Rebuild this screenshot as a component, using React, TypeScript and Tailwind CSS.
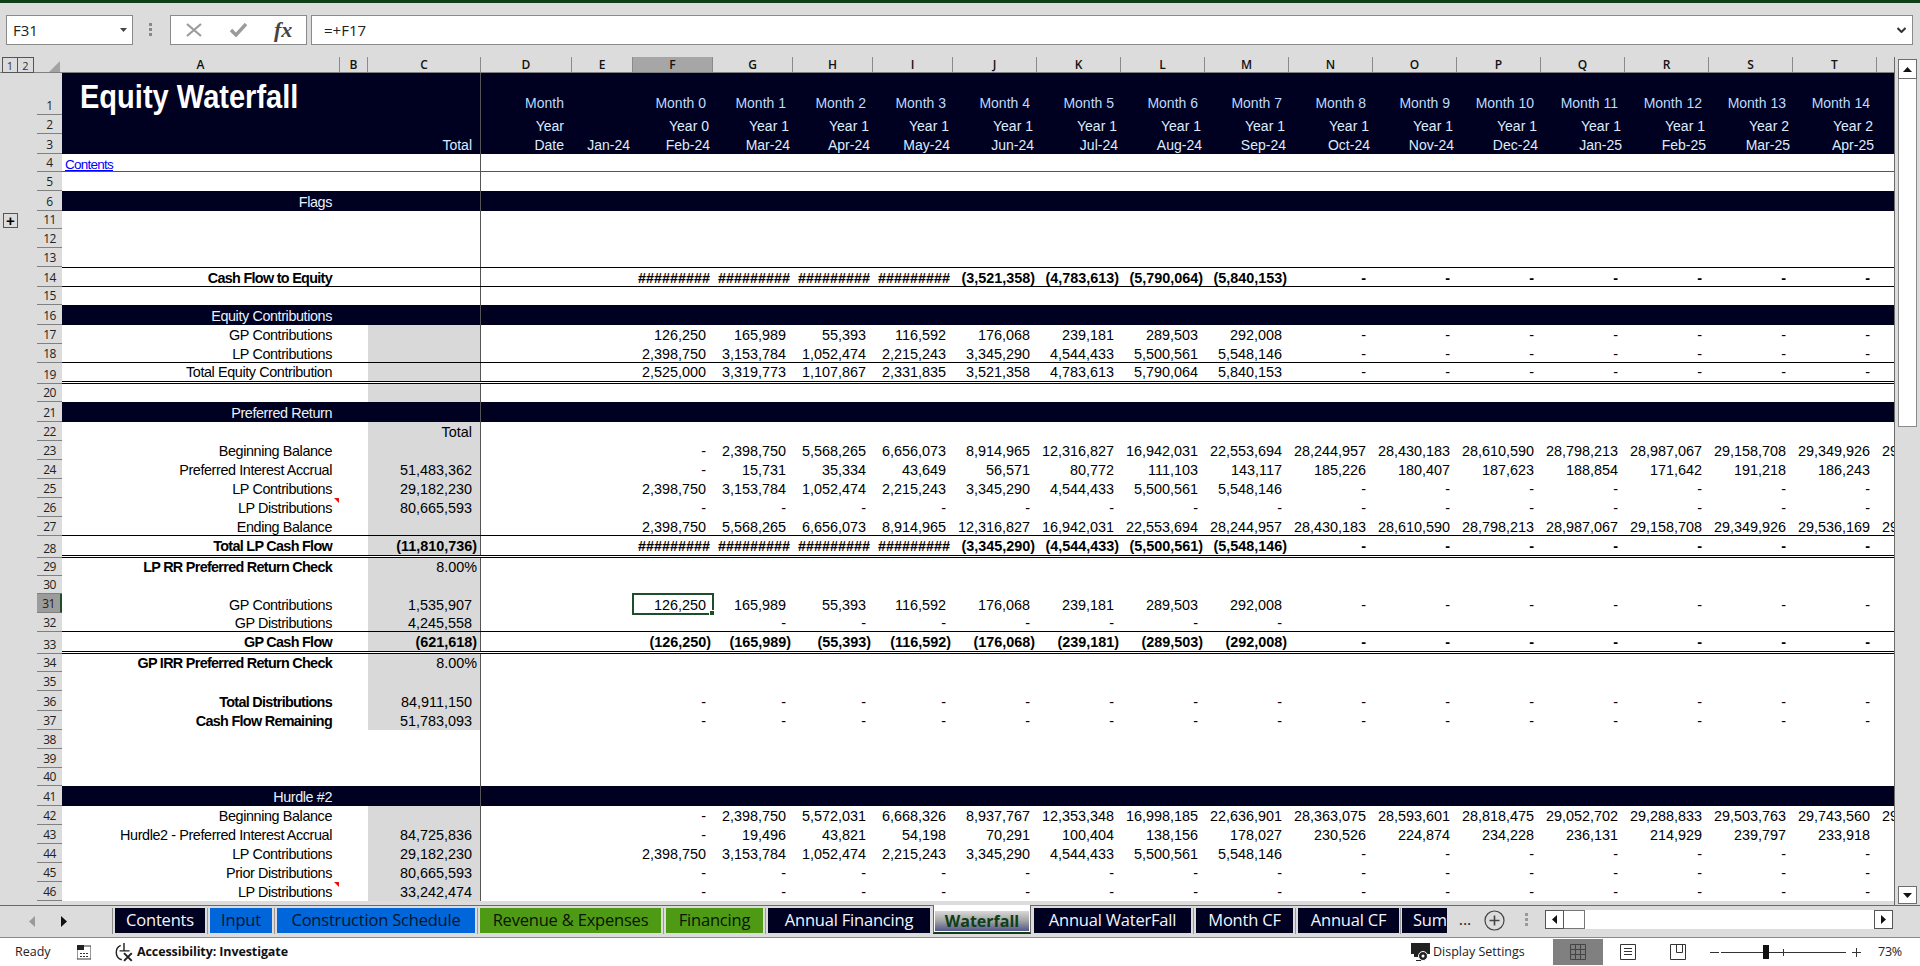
import * as React from "react";

const GRID =
  "grid grid-cols-[278px_28px_113px_91px_61px_repeat(4,80px)_repeat(12,84px)] w-[1899px]";

const COLUMNS = ["A", "B", "C", "D", "E", "F", "G", "H", "I", "J", "K", "L", "M", "N", "O", "P", "Q", "R", "S", "T", ""];

const dashes = (n: number) => Array.from({ length: n }, () => "-");
const HASH = "#########";

const lpContrib = ["2,398,750", "3,153,784", "1,052,474", "2,215,243", "3,345,290", "4,544,433", "5,500,561", "5,548,146"];
const gpContrib = ["126,250", "165,989", "55,393", "116,592", "176,068", "239,181", "289,503", "292,008"];

// rows whose text sits one pixel lower in the cell
const LOW_ROWS = [14, 18, 27, 31, 32];

interface RowData {
  n: number;
  h: string;
  line?: string;
  navy?: boolean;
  grey?: boolean;
  bold?: boolean;
  strong?: boolean; // only the label in column A is bold
  a?: string;
  c?: string;
  note?: boolean;
  values?: string[];
}

const ROWS: RowData[] = [
  { n: 4, h: "h-[18px]" },
  { n: 5, h: "h-[19px]" },
  { n: 6, h: "h-[20px]", navy: true, a: "Flags" },
  { n: 11, h: "h-[18px]" },
  { n: 12, h: "h-[19px]" },
  { n: 13, h: "h-[19px]" },
  {
    n: 14,
    h: "h-[20px]",
    line: "border-y border-black",
    bold: true,
    a: "Cash Flow to Equity",
    values: [HASH, HASH, HASH, HASH, "(3,521,358)", "(4,783,613)", "(5,790,064)", "(5,840,153)", ...dashes(7)],
  },
  { n: 15, h: "h-[18px]" },
  { n: 16, h: "h-[20px]", navy: true, a: "Equity Contributions" },
  { n: 17, h: "h-[19px]", grey: true, a: "GP Contributions", values: [...gpContrib, ...dashes(7)] },
  {
    n: 18,
    h: "h-[19px]",
    grey: true,
    line: "border-b border-black",
    a: "LP Contributions",
    values: [...lpContrib, ...dashes(7)],
  },
  {
    n: 19,
    h: "h-[21px]",
    grey: true,
    line: "border-b-[3px] border-double border-black",
    a: "Total Equity Contribution",
    values: ["2,525,000", "3,319,773", "1,107,867", "2,331,835", "3,521,358", "4,783,613", "5,790,064", "5,840,153", ...dashes(7)],
  },
  { n: 20, h: "h-[18px]", grey: true },
  { n: 21, h: "h-[20px]", navy: true, a: "Preferred Return" },
  { n: 22, h: "h-[19px]", grey: true, c: "Total" },
  {
    n: 23,
    h: "h-[19px]",
    grey: true,
    a: "Beginning Balance",
    values: ["-", "2,398,750", "5,568,265", "6,656,073", "8,914,965", "12,316,827", "16,942,031", "22,553,694", "28,244,957", "28,430,183", "28,610,590", "28,798,213", "28,987,067", "29,158,708", "29,349,926", "29,536,169"],
  },
  {
    n: 24,
    h: "h-[19px]",
    grey: true,
    a: "Preferred Interest Accrual",
    c: "51,483,362",
    values: ["-", "15,731", "35,334", "43,649", "56,571", "80,772", "111,103", "143,117", "185,226", "180,407", "187,623", "188,854", "171,642", "191,218", "186,243"],
  },
  { n: 25, h: "h-[19px]", grey: true, a: "LP Contributions", c: "29,182,230", values: [...lpContrib, ...dashes(7)] },
  { n: 26, h: "h-[19px]", grey: true, a: "LP Distributions", c: "80,665,593", note: true, values: dashes(15) },
  {
    n: 27,
    h: "h-[19px]",
    grey: true,
    line: "border-b border-black",
    a: "Ending Balance",
    values: ["2,398,750", "5,568,265", "6,656,073", "8,914,965", "12,316,827", "16,942,031", "22,553,694", "28,244,957", "28,430,183", "28,610,590", "28,798,213", "28,987,067", "29,158,708", "29,349,926", "29,536,169", "29,725,000"],
  },
  {
    n: 28,
    h: "h-[22px]",
    grey: true,
    bold: true,
    line: "border-b-[3px] border-double border-black",
    a: "Total LP Cash Flow",
    c: "(11,810,736)",
    values: [HASH, HASH, HASH, HASH, "(3,345,290)", "(4,544,433)", "(5,500,561)", "(5,548,146)", ...dashes(7)],
  },
  { n: 29, h: "h-[18px]", grey: true, strong: true, a: "LP RR Preferred Return Check", c: "8.00%" },
  { n: 30, h: "h-[18px]", grey: true },
  { n: 31, h: "h-[19px]", grey: true, a: "GP Contributions", c: "1,535,907", values: [...gpContrib, ...dashes(7)] },
  {
    n: 32,
    h: "h-[19px]",
    grey: true,
    line: "border-b border-black",
    a: "GP Distributions",
    c: "4,245,558",
    values: ["", ...dashes(7)],
  },
  {
    n: 33,
    h: "h-[22px]",
    grey: true,
    bold: true,
    line: "border-b-[3px] border-double border-black",
    a: "GP Cash Flow",
    c: "(621,618)",
    values: ["(126,250)", "(165,989)", "(55,393)", "(116,592)", "(176,068)", "(239,181)", "(289,503)", "(292,008)", ...dashes(7)],
  },
  { n: 34, h: "h-[18px]", grey: true, strong: true, a: "GP IRR Preferred Return Check", c: "8.00%" },
  { n: 35, h: "h-[19px]", grey: true },
  { n: 36, h: "h-[20px]", grey: true, strong: true, a: "Total Distributions", c: "84,911,150", values: dashes(15) },
  { n: 37, h: "h-[19px]", grey: true, strong: true, a: "Cash Flow Remaining", c: "51,783,093", values: dashes(15) },
  { n: 38, h: "h-[19px]" },
  { n: 39, h: "h-[19px]" },
  { n: 40, h: "h-[18px]" },
  { n: 41, h: "h-[20px]", navy: true, a: "Hurdle #2" },
  {
    n: 42,
    h: "h-[19px]",
    grey: true,
    a: "Beginning Balance",
    values: ["-", "2,398,750", "5,572,031", "6,668,326", "8,937,767", "12,353,348", "16,998,185", "22,636,901", "28,363,075", "28,593,601", "28,818,475", "29,052,702", "29,288,833", "29,503,763", "29,743,560", "29,977,478"],
  },
  {
    n: 43,
    h: "h-[19px]",
    grey: true,
    a: "Hurdle2 - Preferred Interest Accrual",
    c: "84,725,836",
    values: ["-", "19,496", "43,821", "54,198", "70,291", "100,404", "138,156", "178,027", "230,526", "224,874", "234,228", "236,131", "214,929", "239,797", "233,918"],
  },
  { n: 44, h: "h-[19px]", grey: true, a: "LP Contributions", c: "29,182,230", values: [...lpContrib, ...dashes(7)] },
  { n: 45, h: "h-[19px]", grey: true, a: "Prior Distributions", c: "80,665,593", values: dashes(15) },
  { n: 46, h: "h-[19px]", grey: true, a: "LP Distributions", c: "33,242,474", note: true, values: dashes(15) },
];

const MONTHS = Array.from({ length: 15 }, (_, i) => `Month ${i}`);
const YEARS = ["Year 0", ...Array.from({ length: 12 }, () => "Year 1"), "Year 2", "Year 2"];
const DATES = ["Feb-24", "Mar-24", "Apr-24", "May-24", "Jun-24", "Jul-24", "Aug-24", "Sep-24", "Oct-24", "Nov-24", "Dec-24", "Jan-25", "Feb-25", "Mar-25", "Apr-25"];

const TABS = [
  { label: "Contents", w: "w-[90px]", cls: "bg-[#000020] text-[#f2f6ff]" },
  { label: "Input", w: "w-[62px]", cls: "bg-[#0066d9] text-[#06162c]" },
  { label: "Construction Schedule", w: "w-[198px]", cls: "bg-[#0066d9] text-[#06162c]" },
  { label: "Revenue & Expenses", w: "w-[181px]", cls: "bg-[#4e9a14] text-[#0a1404]" },
  { label: "Financing", w: "w-[97px]", cls: "bg-[#4e9a14] text-[#0a1404]" },
  { label: "Annual Financing", w: "w-[162px]", cls: "bg-[#000020] text-[#f2f6ff]" },
];
const TABS_AFTER = [
  { label: "Annual WaterFall", w: "w-[157px]" },
  { label: "Month CF", w: "w-[97px]" },
  { label: "Annual CF", w: "w-[101px]" },
];

function cellPad(v: string) {
  if (v.startsWith("(")) return "pr-[2px]";
  if (v.startsWith("#")) return "pr-[3px]";
  return "pr-[7px]";
}

function HeaderCell({ text, cls }: { text?: string; cls: string }) {
  return <div className={`flex items-end justify-end overflow-hidden whitespace-nowrap text-[14px] ${cls}`}>{text}</div>;
}

function HeaderBand() {
  const rows = [
    { n: 1, h: "h-[42px]", labels: MONTHS, d: "Month", cls: "leading-[24px] text-[#b9dcff]", pad: "pr-[7px]" },
    { n: 2, h: "h-[19px]", labels: YEARS, d: "Year", cls: "leading-[15px] text-[#dcecff]", pad: "pr-[4px]" },
    { n: 3, h: "h-[20px]", labels: DATES, d: "Date", cls: "leading-[18px] text-[#dcecff]", pad: "pr-[3px]" },
  ];
  return (
    <>
      {rows.map((r) => (
        <div key={r.n} className={`flex ${r.h}`}>
          <RowHead n={r.n} />
          <div className={`${GRID} relative bg-[#000020]`}>
            <div className="relative col-span-2">
              {r.n === 1 && (
                <div className="absolute left-[18px] top-[5px] origin-left scale-x-[0.88] whitespace-nowrap text-[33px] font-bold leading-[38px] text-white">
                  Equity Waterfall
                </div>
              )}
            </div>
            <div className="flex items-end justify-end border-r border-[#555] pr-[8px] text-[14px] leading-[18px] text-[#dcecff]">
              {r.n === 3 ? "Total" : ""}
            </div>
            <HeaderCell text={r.d} cls={`pr-[8px] ${r.cls}`} />
            <HeaderCell text={r.n === 3 ? "Jan-24" : ""} cls={`pr-[3px] ${r.cls}`} />
            {r.labels.map((t, i) => (
              <HeaderCell key={i} text={t} cls={`${r.pad} ${r.cls}`} />
            ))}
            <div />
          </div>
        </div>
      ))}
    </>
  );
}

function RowHead({ n, plus }: { n: number; plus?: boolean }) {
  const active = n === 31;
  return (
    <div className="relative flex w-[62px] shrink-0">
      <div className="w-[37px]">
        {plus && (
          <div className="absolute left-[3px] top-[2px] flex h-[15px] w-[15px] items-center justify-center border border-[#555] text-[15px] font-bold leading-none text-black">
            +
          </div>
        )}
      </div>
      <div
        className={`flex w-[25px] items-end justify-center border-b border-[#808080] font-['Open_Sans'] text-[12px] leading-[17px] tracking-[-0.5px] text-[#222] ${
          active ? "border-r-2 border-r-[#1e4d2b] bg-[#9c9c9c]" : ""
        }`}
      >
        {n}
      </div>
    </div>
  );
}

function SheetRow({ row }: { row: RowData }) {
  const separator = row.n === 4 ? "border-b border-[#555]" : "";
  const labelBold = row.bold || row.strong;
  const tightC = row.c && (row.c.startsWith("(") || row.c.endsWith("%"));
  const leading = LOW_ROWS.includes(row.n) ? "leading-[16px]" : "leading-[18px]";
  return (
    <div className={`flex ${row.h}`}>
      <RowHead n={row.n} plus={row.n === 11} />
      <div
        className={`${GRID} ${row.navy ? "bg-[#000020]" : "bg-white"} ${row.line ?? ""} ${separator} text-[14.4px] ${leading} ${row.bold ? "font-bold" : ""}`}
      >
        <div
          className={`relative col-span-2 flex items-end justify-end whitespace-nowrap pr-[36px] ${
            labelBold ? "font-bold tracking-[-0.7px]" : "tracking-[-0.4px]"
          } ${row.navy ? "text-[#e8f1ff]" : "text-black"}`}
        >
          {row.n === 4 ? (
            <a className="absolute -bottom-[3px] left-[3px] text-[13.5px] leading-[18px] tracking-[-0.75px] text-[#0000ff] underline">
              Contents
            </a>
          ) : (
            row.a
          )}
          {row.note && (
            <svg className="absolute right-[29px] top-0 h-[5px] w-[5px]" viewBox="0 0 5 5">
              <path d="M0 0h5v5z" fill="#e8100c" />
            </svg>
          )}
        </div>
        <div
          className={`flex items-end justify-end whitespace-nowrap border-r border-[#555] ${tightC ? "pr-[3px]" : "pr-[8px]"} ${
            row.grey ? "bg-[#d9d9d9]" : ""
          }`}
        >
          {row.c}
        </div>
        <div />
        <div />
        {row.values?.map((v, i) => (
          <div key={i} className={`relative flex items-end justify-end whitespace-nowrap ${cellPad(v)}`}>
            {v}
            {row.n === 31 && i === 0 && (
              <div className="pointer-events-none absolute -left-px -top-px h-[22px] w-[82px] border-2 border-[#1e4d2b]">
                <div className="absolute -bottom-[3px] -right-[3px] h-[6px] w-[6px] border border-white bg-[#1e4d2b]" />
              </div>
            )}
          </div>
        ))}
      </div>
    </div>
  );
}

function ColumnHeaders() {
  return (
    <div className="flex h-[16px] shrink-0 border-b border-[#808080]">
      <div className="relative flex w-[62px] shrink-0">
        <div className="ml-[2px] flex h-[16px] font-['Open_Sans'] text-[11px] leading-[15px] text-[#333]">
          <span className="w-[16px] border border-[#555] text-center">1</span>
          <span className="w-[16px] border border-l-0 border-[#555] text-center">2</span>
        </div>
        <svg className="absolute left-[49px] top-[4px] h-[11px] w-[11px]" viewBox="0 0 11 11">
          <path d="M11 0v11H0z" fill="#a3a3a3" />
        </svg>
      </div>
      <div className={`${GRID} font-['Open_Sans'] text-[12px] font-semibold leading-[15px] text-[#111]`}>
        {COLUMNS.map((c, i) => (
          <div
            key={i}
            className={`border-r text-center ${c === "" ? "border-transparent" : "border-[#8a8a8a]"} ${c === "F" ? "bg-[#a6a6a6]" : ""}`}
          >
            {c}
          </div>
        ))}
      </div>
    </div>
  );
}

function VerticalScroll() {
  return (
    <div className="flex w-[25px] shrink-0 flex-col px-[3px] pt-[2px]">
      <div className="flex h-[20px] items-center justify-center border border-[#6e6e6e] bg-white">
        <svg className="h-[5px] w-[9px]" viewBox="0 0 9 5">
          <path d="M4.5 0 9 5H0z" fill="#111" />
        </svg>
      </div>
      <div className="h-[348px] border border-t-0 border-[#8a8a8a] bg-white" />
      <div className="flex-1" />
      <div className="flex h-[18px] items-center justify-center border border-[#6e6e6e] bg-white">
        <svg className="h-[5px] w-[9px]" viewBox="0 0 9 5">
          <path d="M0 0h9L4.5 5z" fill="#111" />
        </svg>
      </div>
      <div className="h-px" />
    </div>
  );
}

function TabBar() {
  return (
    <div className="flex h-[33px] shrink-0 items-start border-y border-t-[#6a6a6a] border-b-[#8a8a8a] bg-[#dcdcdc] pt-[2px] font-['Open_Sans'] text-[16.5px] leading-[22px]">
      <div className="flex h-[26px] w-[112px] shrink-0 items-center pl-[29px]">
        <svg className="h-[11px] w-[6px]" viewBox="0 0 6 11">
          <path d="M6 0v11L0 5.5z" fill="#9a9a9a" />
        </svg>
        <svg className="ml-[26px] h-[11px] w-[6px]" viewBox="0 0 6 11">
          <path d="M0 0v11l6-5.5z" fill="#111" />
        </svg>
      </div>
      <span className="mr-[2px] h-[26px] w-px bg-[#8a8a8a]" />
      {TABS.map((t, i) => (
        <React.Fragment key={t.label}>
          <div className={`flex h-[25px] shrink-0 items-center justify-center whitespace-nowrap pb-[2px] tracking-[-0.2px] ${t.w} ${t.cls}`}>
            {t.label}
          </div>
          {i < TABS.length - 1 && <span className="mx-[2px] h-[26px] w-px bg-[#9a9a9a]" />}
          {i === TABS.length - 1 && <span className="w-[3px]" />}
        </React.Fragment>
      ))}
      <div className="-mt-[3px] flex h-[29px] w-[98px] shrink-0 items-end border-x border-b-2 border-x-[#6a6a6a] border-b-[#0e3f16] bg-white px-px pb-px">
        <div className="flex h-[20px] w-full items-center justify-center bg-linear-to-b from-[#d9d9d9] via-[#a3a3a3] to-[#55558c] text-[16px] font-bold leading-[18px] text-[#0e3f16]">
          Waterfall
        </div>
      </div>
      <span className="w-[3px]" />
      {TABS_AFTER.map((t, i) => (
        <React.Fragment key={t.label}>
          <div className={`flex h-[25px] shrink-0 items-center justify-center whitespace-nowrap bg-[#000020] pb-[2px] tracking-[-0.2px] text-[#f2f6ff] ${t.w}`}>
            {t.label}
          </div>
          <span className={`h-[26px] w-px bg-[#9a9a9a] ${i === 2 ? "mx-[1px]" : "mx-[2px]"}`} />
        </React.Fragment>
      ))}
      <div className="flex h-[25px] w-[45px] shrink-0 items-center overflow-hidden whitespace-nowrap bg-[#000020] pb-[2px] pl-[11px] tracking-[-0.2px] text-[#f2f6ff]">
        Sum
      </div>
      <span className="ml-[8px] w-[20px] text-center text-[16px] leading-[22px] text-[#222]">...</span>
      <svg className="ml-[9px] mt-[2px] h-[21px] w-[21px]" viewBox="0 0 21 21" fill="none" stroke="#444">
        <circle cx="10.5" cy="10.5" r="9.5" strokeWidth="1.2" />
        <path d="M10.5 5.5v10M5.5 10.5h10" strokeWidth="1.6" />
      </svg>
      <div className="ml-[20px] mt-[5px] flex w-[3px] flex-col gap-[2px]">
        <span className="h-[3px] bg-[#999]" />
        <span className="h-[3px] bg-[#999]" />
        <span className="h-[3px] bg-[#999]" />
      </div>
      <div className="ml-[17px] mt-[2px] flex h-[19px] w-[348px] bg-white">
        <div className="flex h-[19px] w-[19px] items-center justify-center border border-[#555]">
          <svg className="h-[9px] w-[5px]" viewBox="0 0 5 9">
            <path d="M5 0v9L0 4.5z" fill="#111" />
          </svg>
        </div>
        <div className="h-[19px] w-[21px] border border-l-0 border-[#777]" />
        <div className="flex-1" />
        <div className="flex h-[19px] w-[19px] items-center justify-center border border-[#555]">
          <svg className="h-[9px] w-[5px]" viewBox="0 0 5 9">
            <path d="M0 0v9l5-4.5z" fill="#111" />
          </svg>
        </div>
      </div>
    </div>
  );
}

function StatusBar() {
  return (
    <div className="flex h-[28px] shrink-0 items-center bg-white font-['Open_Sans'] text-[12.5px] text-[#222]">
      <span className="ml-[15px] w-[62px]">Ready</span>
      <svg className="h-[15px] w-[14px]" viewBox="0 0 14 15">
        <path d="M0 1h14v13H0z" fill="none" stroke="#333" />
        <path d="M0 0h7v5H0z" fill="#222" />
        <path d="M3 8h2v1H3zM6 8h2v1H6zM9 8h2v1H9zM3 11h2v1H3zM6 11h2v1H6zM9 11h2v1H9z" fill="#333" />
      </svg>
      <svg className="ml-[23px] h-[20px] w-[20px]" viewBox="0 0 18 18" fill="none" stroke="#222" strokeWidth="1.3">
        <path d="M6 3a7 7 0 0 0 1 13" />
        <path d="M9 1v7M5 8h9" />
        <path d="M9 10l7 7M16 10l-7 7" strokeWidth="1.8" />
      </svg>
      <span className="ml-[3px] text-[12.5px] font-bold tracking-[-0.1px] text-[#111]">Accessibility: Investigate</span>
      <div className="ml-auto flex items-center">
        <svg className="h-[20px] w-[19px]" viewBox="0 0 19 20">
          <path d="M0 1h19v11H11v3H3v-3H0z" fill="#222" />
          <circle cx="12" cy="14" r="4.5" fill="#222" stroke="#fff" />
          <circle cx="12" cy="14" r="1.5" fill="#fff" />
          <path d="M5 18h5v1H5z" fill="#222" />
        </svg>
        <span className="ml-[3px] w-[120px]">Display Settings</span>
        <div className="flex h-[26px] w-[50px] items-center justify-center self-start bg-[#808080]">
          <svg className="h-[16px] w-[16px]" viewBox="0 0 16 16" fill="none" stroke="#444">
            <path d="M.5.5h15v15H.5zM5.5.5v15M10.5.5v15M.5 5.5h15M.5 10.5h15" />
          </svg>
        </div>
        <svg className="ml-[17px] h-[16px] w-[16px]" viewBox="0 0 16 16" fill="none" stroke="#333">
          <path d="M.5.5h15v15H.5zM4 4.5h8M4 7.5h8M4 10.5h8" />
        </svg>
        <svg className="ml-[34px] h-[16px] w-[16px]" viewBox="0 0 16 16" fill="none" stroke="#333">
          <path d="M.5.5h15v15H.5zM6.5.5v8h6V.5" />
        </svg>
        <span className="ml-[24px] h-px w-[9px] bg-[#333]" />
        <div className="relative ml-[2px] h-[14px] w-[125px]">
          <span className="absolute left-0 top-[7px] h-px w-full bg-[#333]" />
          <span className="absolute left-[62px] top-[4px] h-[7px] w-px bg-[#333]" />
          <span className="absolute left-[42px] top-0 h-[14px] w-[6px] bg-[#111]" />
        </div>
        <svg className="ml-[6px] h-[9px] w-[9px]" viewBox="0 0 9 9" stroke="#333">
          <path d="M4.5 0v9M0 4.5h9" />
        </svg>
        <span className="ml-[17px] mr-[18px] tracking-[-0.2px]">73%</span>
      </div>
    </div>
  );
}

export default function App() {
  return (
    <div className="flex h-[966px] w-[1920px] flex-col overflow-hidden bg-[#dcdcdc] font-['Liberation_Sans',sans-serif] text-black">
      <div className="h-[3px] shrink-0 bg-[#0e3f16]" />

      {/* formula bar */}
      <div className="flex h-[54px] shrink-0 items-start pl-[6px] pr-[7px] pt-[12px] font-['Open_Sans'] text-[15px]">
        <div className="flex h-[30px] w-[127px] items-center justify-between border border-[#8a8a8a] bg-white pl-[6px] pr-[5px] text-[#222]">
          F31
          <svg className="h-[4px] w-[7px]" viewBox="0 0 7 4">
            <path d="M0 0h7L3.5 4z" fill="#444" />
          </svg>
        </div>
        <div className="ml-[16px] mt-[8px] flex w-[3px] flex-col gap-[2px]">
          <span className="h-[3px] bg-[#888]" />
          <span className="h-[3px] bg-[#888]" />
          <span className="h-[3px] bg-[#888]" />
        </div>
        <div className="ml-[18px] flex h-[30px] w-[137px] items-center border border-[#8a8a8a] bg-white">
          <svg className="ml-[15px] h-[14px] w-[16px]" viewBox="0 0 16 14" stroke="#9b9b9b" strokeWidth="2.2">
            <path d="M1 1l14 12M15 1 1 13" />
          </svg>
          <svg className="ml-[28px] h-[14px] w-[17px]" viewBox="0 0 17 14" fill="none" stroke="#9b9b9b" strokeWidth="3.4">
            <path d="M1 7l5 5 10-11" />
          </svg>
          <span className="ml-[27px] font-['Liberation_Serif'] text-[22px] font-bold italic leading-none text-[#444]">fx</span>
        </div>
        <div className="ml-[4px] flex h-[30px] flex-1 items-center justify-between border border-[#8a8a8a] bg-white pl-[12px] pr-[6px] text-[#222]">
          =+F17
          <svg className="h-[6px] w-[9px]" viewBox="0 0 9 6" fill="none" stroke="#333" strokeWidth="2">
            <path d="M.5 1 4.5 5l4-4" />
          </svg>
        </div>
      </div>

      {/* sheet and vertical scrollbar */}
      <div className="flex min-h-0 flex-1">
        <div className="flex w-[1895px] shrink-0 flex-col overflow-hidden border-r border-[#6a6a6a]">
          <ColumnHeaders />
          <HeaderBand />
          <div className="min-h-0 flex-1 overflow-hidden">
            {ROWS.map((r) => (
              <SheetRow key={r.n} row={r} />
            ))}
          </div>
        </div>
        <VerticalScroll />
      </div>

      <TabBar />
      <StatusBar />
    </div>
  );
}
